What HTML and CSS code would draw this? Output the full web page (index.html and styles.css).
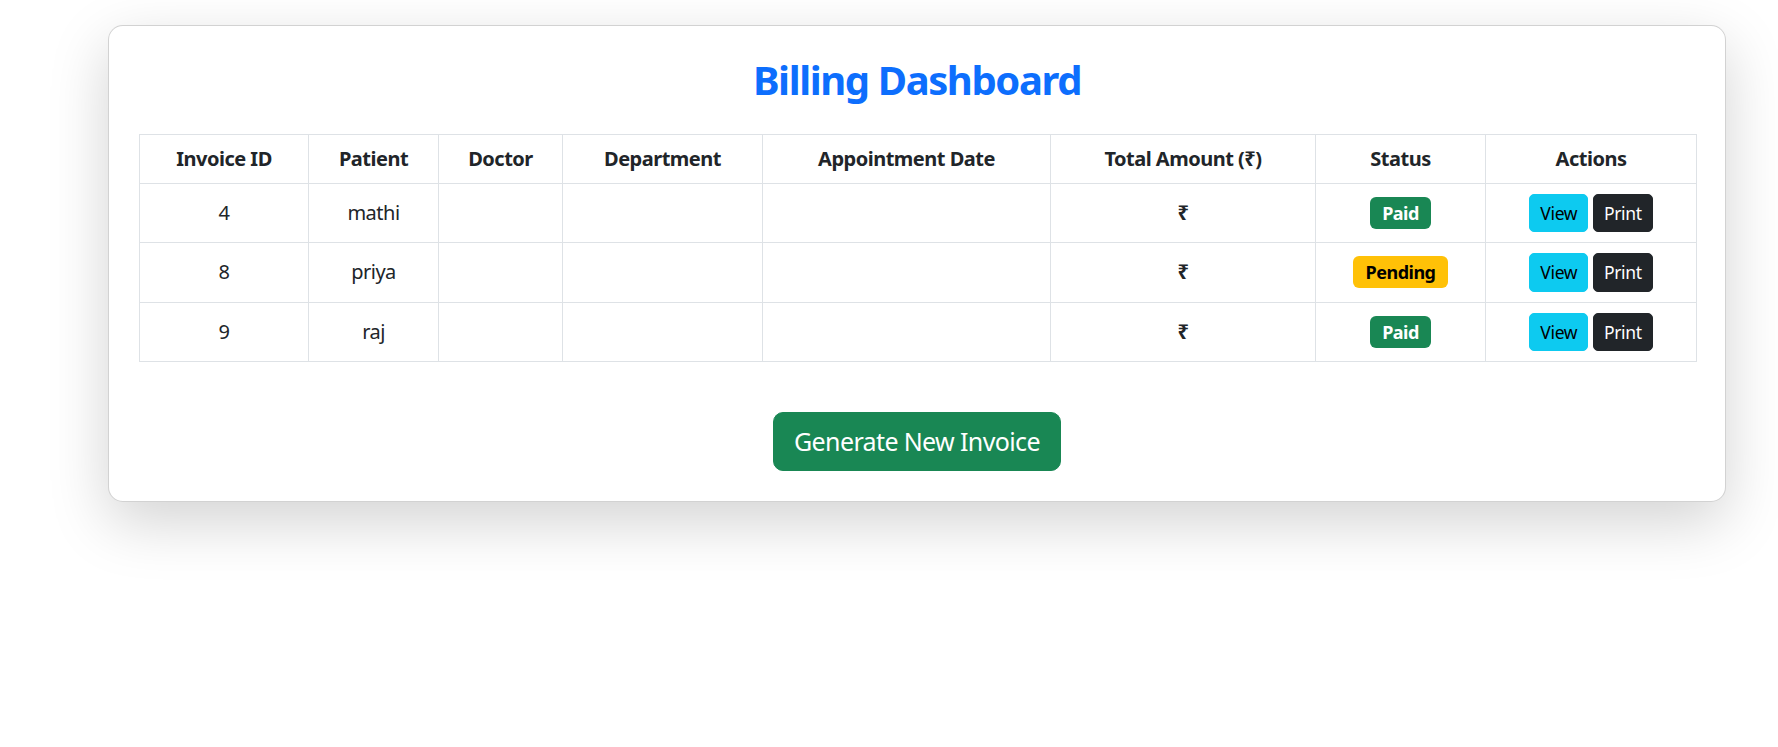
FILE: index.html
```html
<!DOCTYPE html>
<html lang="en">
<head>
<meta charset="utf-8">
<title>Billing Dashboard</title>
<link rel="stylesheet" href="styles.css">
</head>
<body>
<div class="page">
  <div class="card">
    <h2 class="title">Billing Dashboard</h2>
    <table class="bill-table">
      <colgroup>
        <col class="w-id">
        <col class="w-patient">
        <col class="w-doctor">
        <col class="w-dept">
        <col class="w-date">
        <col class="w-amount">
        <col class="w-status">
        <col class="w-actions">
      </colgroup>
      <thead>
        <tr>
          <th>Invoice ID</th>
          <th>Patient</th>
          <th>Doctor</th>
          <th>Department</th>
          <th>Appointment Date</th>
          <th>Total Amount (₹)</th>
          <th>Status</th>
          <th>Actions</th>
        </tr>
      </thead>
      <tbody>
        <tr>
          <td>4</td>
          <td>mathi</td>
          <td></td>
          <td></td>
          <td></td>
          <td class="amount">₹</td>
          <td><span class="badge paid">Paid</span></td>
          <td><button class="btn-sm view">View</button> <button class="btn-sm print">Print</button></td>
        </tr>
        <tr>
          <td>8</td>
          <td>priya</td>
          <td></td>
          <td></td>
          <td></td>
          <td class="amount">₹</td>
          <td><span class="badge pending">Pending</span></td>
          <td><button class="btn-sm view">View</button> <button class="btn-sm print">Print</button></td>
        </tr>
        <tr>
          <td>9</td>
          <td>raj</td>
          <td></td>
          <td></td>
          <td></td>
          <td class="amount">₹</td>
          <td><span class="badge paid">Paid</span></td>
          <td><button class="btn-sm view">View</button> <button class="btn-sm print">Print</button></td>
        </tr>
      </tbody>
    </table>
    <div class="generate-row">
      <button class="btn-lg">Generate New Invoice</button>
    </div>
  </div>
</div>
</body>
</html>
```

FILE: styles.css
```css
* {
  box-sizing: border-box;
}

html,
body {
  background: #fff;
}

body {
  margin: 0;
  min-height: 747px;
  color: #212529;
  font-family: "Segoe UI", "Noto Sans", "DejaVu Sans", sans-serif;
  font-size: 20px;
  line-height: 1.5;
  letter-spacing: -0.025em;
}

.page {
  padding: 25px 52px 120px 108px;
}

.card {
  background: #fff;
  border: 1px solid rgba(0, 0, 0, 0.175);
  border-radius: 15px;
  box-shadow: 0 20px 60px rgba(0, 0, 0, 0.175);
  padding: 30px;
}

.title {
  margin: 0 0 30px;
  text-align: center;
  color: #0d6efd;
  font-size: 40px;
  font-weight: 700;
  line-height: 48px;
  letter-spacing: -0.035em;
}

.bill-table {
  width: 100%;
  border-collapse: collapse;
  table-layout: fixed;
  margin: 0;
}

.w-id { width: 169px; }
.w-patient { width: 130px; }
.w-doctor { width: 124px; }
.w-dept { width: 200px; }
.w-date { width: 288px; }
.w-amount { width: 265px; }
.w-status { width: 170px; }
.w-actions { width: 211px; }

.bill-table th,
.bill-table td {
  border: 1px solid #dee2e6;
  text-align: center;
  vertical-align: middle;
  padding: 10px;
}

.bill-table th {
  font-weight: 700;
  padding: 9px 10px;
}

.bill-table tbody tr {
  height: 59px;
}

.amount {
  font-weight: 700;
}

.badge {
  display: inline-block;
  font-size: 18px;
  font-weight: 700;
  line-height: 1;
  padding: 7px 12.5px;
  border-radius: 6px;
}

.badge.paid {
  background: #198754;
  color: #fff;
}

.badge.pending {
  background: #ffc107;
  color: #000;
}

.btn-sm {
  font-family: inherit;
  font-size: 17.5px;
  letter-spacing: -0.02em;
  line-height: 1.5;
  padding: 5px 10px;
  border: 1px solid transparent;
  border-radius: 5px;
  cursor: pointer;
}

.btn-sm.view {
  background: #0dcaf0;
  border-color: #0dcaf0;
  color: #000;
}

.btn-sm.print {
  background: #212529;
  border-color: #212529;
  color: #fff;
}

.generate-row {
  text-align: center;
  margin-top: 50px;
}

.btn-lg {
  font-family: inherit;
  font-size: 25px;
  letter-spacing: -0.025em;
  line-height: 1.5;
  padding: 10px 20px;
  background: #198754;
  border: 1px solid #198754;
  border-radius: 10px;
  color: #fff;
  cursor: pointer;
}
```
